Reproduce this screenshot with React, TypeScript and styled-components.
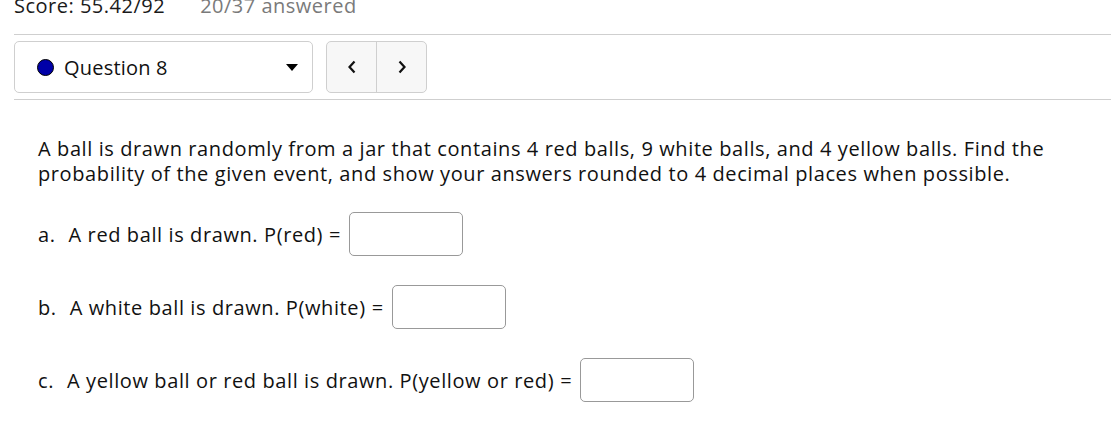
import React from "react";
import styled, { createGlobalStyle } from "styled-components";

const Global = createGlobalStyle`
  html, body { margin: 0; padding: 0; background: #fff; }
  body { font-family: "Open Sans", "Noto Sans", sans-serif; color: #111; overflow: hidden; }
`;

const Page = styled.div`
  padding-left: 14px;
  width: 1097px;
  height: 441px;
  overflow: hidden;
`;

const ScoreBar = styled.div`
  height: 34px;
  display: flex;
  align-items: flex-end;
  font-size: 20px;
  line-height: 20px;
  overflow: hidden;
  border-bottom: 1px solid #cfcfcf;
`;

const ScoreBarInner = styled.div`
  display: flex;
  gap: 35px;
  margin-bottom: 18px;
  letter-spacing: 0.5px;
`;

const Score = styled.span<{ $muted?: boolean }>`
  color: ${(p) => (p.$muted ? "#7a7a7a" : "#1a1a1a")};
`;

const Toolbar = styled.div`
  display: flex;
  gap: 13px;
  padding: 6px 0 6px 0;
  border-bottom: 1px solid #cfcfcf;
`;

const Select = styled.div`
  width: 299px;
  height: 52px;
  box-sizing: border-box;
  border: 1px solid #cfcfcf;
  border-radius: 5px;
  display: flex;
  align-items: center;
  padding: 0 14px 0 22px;
  font-size: 20px;
  color: #111;
`;

const Dot = styled.span`
  width: 17px;
  height: 17px;
  border-radius: 50%;
  background: #0000a8;
  border: 1.5px solid #000;
  box-sizing: border-box;
  margin-right: 10px;
`;

const SelectLabel = styled.span`
  flex: 1;
  letter-spacing: 0.2px;
`;

const Caret = styled.span`
  width: 0;
  height: 0;
  border-left: 6px solid transparent;
  border-right: 6px solid transparent;
  border-top: 7px solid #000;
`;

const NavGroup = styled.div`
  display: flex;
  width: 101px;
  height: 52px;
  box-sizing: border-box;
  border: 1px solid #cfcfcf;
  border-radius: 5px;
  background: #f7f7f7;
  overflow: hidden;
`;

const NavButton = styled.button<{ $first?: boolean }>`
  flex: 1;
  border: none;
  background: transparent;
  border-right: ${(p) => (p.$first ? "1px solid #cfcfcf" : "none")};
  display: flex;
  align-items: center;
  justify-content: center;
  padding: 0;
`;

const Body = styled.div`
  padding: 36px 0 0 24px;
  font-size: 20px;
  line-height: 25px;
  letter-spacing: 0.6px;
  color: #111;
`;

const Prompt = styled.p`
  margin: 0 0 26px 0;
  max-width: 1040px;
`;

const Part = styled.div`
  display: flex;
  align-items: center;
  height: 44px;
  margin-bottom: 29px;
`;

const PartLetter = styled.span`
  margin-right: 13px;
`;

const Eq = styled.span`
  margin: 0 8px 0 6px;
`;

const AnswerBox = styled.input`
  width: 114px;
  height: 44px;
  box-sizing: border-box;
  border: 1px solid #999;
  border-radius: 5px;
  background: #fff;
  outline: none;
`;

const Chevron = ({ dir }: { dir: "l" | "r" }) => (
  <svg width="12" height="16" viewBox="0 0 12 16">
    <path
      d={dir === "l" ? "M8.5 2.5 L3.5 8 L8.5 13.5" : "M3.5 2.5 L8.5 8 L3.5 13.5"}
      stroke="#111"
      strokeWidth="2.2"
      fill="none"
    />
  </svg>
);

const parts = [
  { letter: "a.", text: "A red ball is drawn. P(red)" },
  { letter: "b.", text: "A white ball is drawn. P(white)" },
  { letter: "c.", text: "A yellow ball or red ball is drawn. P(yellow or red)" },
];

export default function App() {
  return (
    <Page>
      <Global />
      <ScoreBar>
        <ScoreBarInner>
          <Score>Score: 55.42/92</Score>
          <Score $muted>20/37 answered</Score>
        </ScoreBarInner>
      </ScoreBar>
      <Toolbar>
        <Select>
          <Dot />
          <SelectLabel>Question 8</SelectLabel>
          <Caret />
        </Select>
        <NavGroup>
          <NavButton $first aria-label="previous">
            <Chevron dir="l" />
          </NavButton>
          <NavButton aria-label="next">
            <Chevron dir="r" />
          </NavButton>
        </NavGroup>
      </Toolbar>
      <Body>
        <Prompt>
          A ball is drawn randomly from a jar that contains 4 red balls, 9 white balls, and 4 yellow
          balls. Find the probability of the given event, and show your answers rounded to 4 decimal
          places when possible.
        </Prompt>
        {parts.map((p) => (
          <Part key={p.letter}>
            <PartLetter>{p.letter}</PartLetter>
            <span>{p.text}</span>
            <Eq>=</Eq>
            <AnswerBox />
          </Part>
        ))}
      </Body>
    </Page>
  );
}
